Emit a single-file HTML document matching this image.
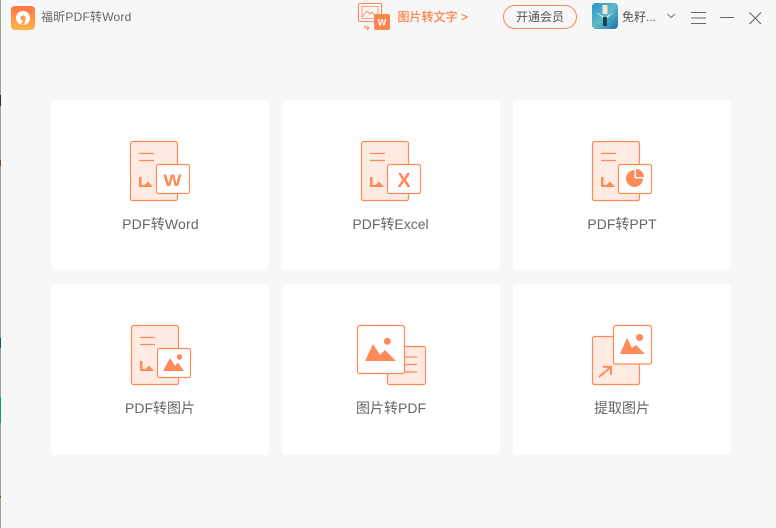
<!DOCTYPE html>
<html><head><meta charset="utf-8"><style>
html,body{margin:0;padding:0;width:776px;height:528px;overflow:hidden;background:#f7f7f7}
body{position:relative;font-family:"Liberation Sans","Noto Sans CJK SC",sans-serif;color:#666}
.c{position:absolute;background:#fff;border-radius:4px}
.t{position:absolute;white-space:nowrap;line-height:18px}
.l{text-align:center;font-size:14px;width:218px;color:#666}
svg{position:absolute;left:0;top:0}
</style></head><body>
<div class="c" style="left:51px;top:100px;width:218px;height:170px"></div>
<div class="c" style="left:282px;top:100px;width:218px;height:170px"></div>
<div class="c" style="left:513px;top:100px;width:218px;height:170px"></div>
<div class="c" style="left:51px;top:284px;width:218px;height:171px"></div>
<div class="c" style="left:282px;top:284px;width:218px;height:171px"></div>
<div class="c" style="left:513px;top:284px;width:218px;height:171px"></div>

<svg width="776" height="528" viewBox="0 0 776 528" xmlns="http://www.w3.org/2000/svg">
<defs>
<linearGradient id="g" x1="0" y1="0" x2="0" y2="1"><stop offset="0" stop-color="#ff7443"/><stop offset="1" stop-color="#ffb648"/></linearGradient>
<linearGradient id="a" x1="0" y1="0" x2="1" y2="1"><stop offset="0" stop-color="#2a8fcc"/><stop offset=".5" stop-color="#5cbcc8"/><stop offset="1" stop-color="#1c6fb0"/></linearGradient>
<g id="doc" fill="none" stroke="#ff8a58">
<rect x="130.5" y="141.5" width="47" height="59" rx="2" fill="#ffebe2" stroke-width="1.2"/>
<path d="M139 153.5h15M139 160.5h15" stroke-width="1.2"/>
<path d="M139 177h2.500v8h3l3.500-3.500 5 5.500h-14z" fill="#ff8a58" stroke="none"/>
</g>
</defs>

<!-- left edge strip -->
<rect x="0" y="0" width="1" height="528" fill="#93a893"/>
<rect x="0" y="95" width="1" height="11" fill="#27323d"/>
<rect x="0" y="160" width="1" height="6" fill="#7a4a30"/>
<rect x="0" y="338" width="1" height="10" fill="#1c4f70"/>
<rect x="0" y="397" width="1" height="26" fill="#159a78"/>
<rect x="0" y="496" width="1" height="2" fill="#8a5a20"/>

<!-- logo -->
<rect x="11" y="6" width="24" height="24" rx="4" fill="url(#g)"/>
<circle cx="23" cy="18" r="7" fill="#fff"/>
<circle cx="23" cy="18" r="2.600" fill="#ff9a50"/>
<path d="M20 24.500l5-6 1-.500-2 6.500z" fill="#ffa850"/>

<!-- promo icon -->
<g fill="none" stroke="#ff8a58" stroke-width="1.1">
<rect x="358.5" y="3.5" width="23" height="18" rx="1"/>
<path d="M362 6.500h16v12h-16z" stroke-width=".8"/>
<path d="M362 17l5-6 3 3 2-2 4 5" stroke-width=".9"/>
<path d="M365 25v3h4M367 26l2 2-2 2" stroke-width="1"/>
</g>
<rect x="374" y="14" width="16" height="16" rx="2" fill="#ff8450"/>
<text x="382" y="25.500" text-anchor="middle" font-family="Liberation Sans" font-weight="bold" font-size="9" fill="#fff">W</text>

<!-- vip button -->
<rect x="503.5" y="5.5" width="73" height="23" rx="11.5" fill="none" stroke="#ff8a58" stroke-width="1.1"/>

<!-- avatar -->
<rect x="592" y="3" width="26" height="26" rx="4" fill="url(#a)"/>
<rect x="602.500" y="5" width="5" height="9" fill="#f5e5d0"/>
<path d="M596 12l8 7v6h2v-6l8-7-8 5h-2z" fill="#e8f0e8"/>
<path d="M603 17h4v9h-4z" fill="#26404a"/>

<!-- window controls -->
<path d="M667.5 14l3.700 3.500 3.700-3.500" fill="none" stroke="#777" stroke-width="1"/>
<path d="M691 12.500h15M691 18h15M691 23.500h15M720 17.500h14M749.500 12.500l11.500 11.500M761 12.500l-11.500 11.500" fill="none" stroke="#666" stroke-width="1.1"/>

<!-- card 1 -->
<use href="#doc"/>
<rect x="156.5" y="164.5" width="33" height="29" rx="2" fill="#fff" stroke="#ff8a58" stroke-width="1.2"/>
<text x="163.500" y="186" textLength="18" lengthAdjust="spacingAndGlyphs" font-family="Liberation Sans" font-weight="bold" font-size="17" fill="#ff8a58">W</text>

<!-- card 2 -->
<use href="#doc" x="231"/>
<rect x="387.5" y="164.5" width="33" height="29" rx="2" fill="#fff" stroke="#ff8a58" stroke-width="1.2"/>
<text x="404" y="187" text-anchor="middle" font-family="Liberation Sans" font-weight="bold" font-size="20" fill="#ff8a58">X</text>

<!-- card 3 -->
<use href="#doc" x="462"/>
<rect x="618.5" y="164.5" width="33" height="29" rx="2" fill="#fff" stroke="#ff8a58" stroke-width="1.2"/>
<path d="M634.500 170v8.500h8.500a8.500 8.500 0 1 1-8.500-8.500z" fill="#ff8a58"/>
<path d="M636 169a8 8 0 0 1 8 8h-8z" fill="#ff8a58"/>

<!-- card 4 -->
<use href="#doc" x="1" y="184"/>
<rect x="157.500" y="348.500" width="33" height="29" rx="2" fill="#fff" stroke="#ff8a58" stroke-width="1.2"/>
<path d="M163 371l7-13 5 8 3-3.500 6 8.500z" fill="#ff8a58"/>
<circle cx="179.500" cy="357" r="2.700" fill="#ff8a58"/>

<!-- card 5 -->
<rect x="387.500" y="346.500" width="38" height="38" rx="2" fill="#ffebe2" stroke="#ff8a58" stroke-width="1.2"/>
<path d="M405 357h12M405 364.500h12M405 372h12" stroke="#ff8a58" stroke-width="1.2"/>
<rect x="357.500" y="325.500" width="47" height="48" rx="2" fill="#fff" stroke="#ff8a58" stroke-width="1.2"/>
<path d="M365 361l8-17 7 11 5-5 11 11z" fill="#ff8a58"/>
<circle cx="387.300" cy="341.300" r="3.500" fill="#ff8a58"/>

<!-- card 6 -->
<rect x="592.500" y="336.500" width="47" height="48" rx="2" fill="#ffebe2" stroke="#ff8a58" stroke-width="1.2"/>
<path d="M599 377l12-10M603 366.800h8v8" fill="none" stroke="#ff8a58" stroke-width="1.900"/>
<rect x="613.500" y="325.500" width="38" height="38.500" rx="2" fill="#fff" stroke="#ff8a58" stroke-width="1.2"/>
<path d="M620 354l7-16 5 10 4-3 9 9z" fill="#ff8a58"/>
<circle cx="639.500" cy="337.500" r="3.500" fill="#ff8a58"/>
</svg>

<div class="t" style="left:41px;top:8px;font-size:12px;letter-spacing:.2px;color:#666">福昕PDF转Word</div>
<div class="t" style="left:397.500px;top:8px;font-size:12px;color:#ff8044;-webkit-text-stroke:.2px #ff8044">图片转文字 &gt;</div>
<div class="t" style="left:516px;top:8px;font-size:12px;color:#555">开通会员</div>
<div class="t" style="left:622px;top:8px;font-size:12px;color:#555">免籽...</div>

<div class="t l" style="left:51.500px;top:215px;letter-spacing:.2px">PDF转Word</div>
<div class="t l" style="left:281.500px;top:215px">PDF转Excel</div>
<div class="t l" style="left:513px;top:215px">PDF转PPT</div>
<div class="t l" style="left:51px;top:399px">PDF转图片</div>
<div class="t l" style="left:282px;top:399px">图片转PDF</div>
<div class="t l" style="left:513px;top:399px">提取图片</div>
</body></html>
